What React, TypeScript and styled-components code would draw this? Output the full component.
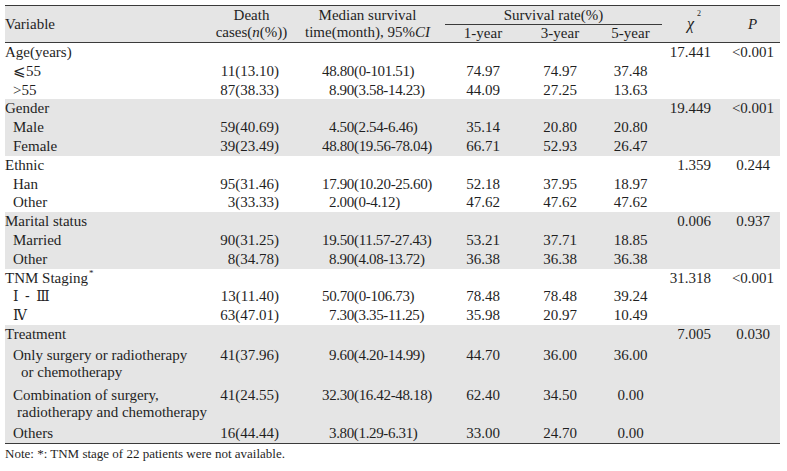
import React from "react";
import styled, { createGlobalStyle, css } from "styled-components";

const GlobalStyle = createGlobalStyle`
  html, body { margin: 0; padding: 0; background: #ffffff; }
  body {
    font-family: "Liberation Serif", "Times New Roman", "DejaVu Serif", serif;
    color: #1f1f1f;
  }
`;

const COLS = "208px 77px 155px 76px 78px 63px 63px 55px";
const SHADE = "#e5e5e5";

const Page = styled.div`
  padding: 5px 7px 0 5px;
  width: 775px;
`;

const Table = styled.div`
  display: flex;
  flex-direction: column;
  font-size: 15px;
  border-bottom: 1px solid #3a3a3a;
`;

const Header = styled.div`
  display: grid;
  grid-template-columns: ${COLS};
  grid-template-rows: 19px 17px;
  background: ${SHADE};
  border-top: 1px solid #3a3a3a;
  border-bottom: 1px solid #3a3a3a;
`;

const HeadCell = styled.div<{ $col: string; $row: string; $align?: string }>`
  grid-column: ${(p) => p.$col};
  grid-row: ${(p) => p.$row};
  display: flex;
  flex-direction: column;
  justify-content: center;
  align-items: ${(p) => p.$align || "center"};
  line-height: 17px;
  white-space: nowrap;
`;

const GroupHead = styled.div`
  grid-column: 4 / 7;
  grid-row: 1;
  display: flex;
  align-items: center;
  justify-content: center;
  line-height: 18px;
  border-bottom: 1px solid #3a3a3a;
  box-sizing: border-box;
  white-space: nowrap;
`;

const ChiMark = styled.span`
  position: relative;
  line-height: 17px;
  margin-right: 6px;
`;

const Chi = styled.span`
  font-style: italic;
  font-size: 16px;
`;

const ChiTwo = styled.span`
  position: absolute;
  left: 10px;
  top: -5px;
  font-size: 8px;
  line-height: 1;
`;

const Star = styled.span`
  display: inline-block;
  font-size: 9px;
  line-height: 1;
  transform: translateY(-7px);
  margin-left: 1px;
`;

const Section = styled.div<{ $shade: boolean }>`
  display: flex;
  flex-direction: column;
  background: ${(p) => (p.$shade ? SHADE : "transparent")};
`;

const Row = styled.div<{ $multi?: boolean }>`
  display: grid;
  grid-template-columns: ${COLS};
  align-items: start;
  white-space: nowrap;
  ${(p) =>
    p.$multi
      ? css`
          line-height: 16.5px;
          padding: 3.5px 0;
        `
      : css`
          line-height: 18.8px;
        `}
`;

const Label = styled.div<{ $indent: number }>`
  padding-left: ${(p) => p.$indent}px;
`;

const LabelLine = styled.div<{ $indent: number }>`
  padding-left: ${(p) => p.$indent}px;
`;

const Deaths = styled.div`
  text-align: right;
  padding-right: 11px;
`;

const Median = styled.div<{ $shift: boolean }>`
  padding-left: ${(p) => (p.$shift ? 39 : 32)}px;
  letter-spacing: -0.35px;
`;

const Rate = styled.div`
  text-align: center;
`;

const ChiVal = styled.div`
  text-align: right;
  padding-right: 14px;
`;

const PVal = styled.div`
  text-align: center;
  padding-left: 1px;
`;

const Note = styled.div`
  font-size: 13px;
  line-height: 16px;
  margin-top: 2px;
`;

const It = styled.i`
  font-style: italic;
`;

const Roman = styled.span`
  font-family: "DejaVu Serif", "Noto Sans CJK SC", serif;
  font-size: 14px;
  word-spacing: 2px;
`;

type DataRow = {
  label: React.ReactNode;
  lines?: { text: string; indent: number }[];
  deaths: string;
  median: string;
  r1: string;
  r3: string;
  r5: string;
};

type Group = {
  label: React.ReactNode;
  chi: string;
  p: string;
  shade: boolean;
  rows: DataRow[];
};

const groups: Group[] = [
  {
    label: "Age(years)",
    chi: "17.441",
    p: "<0.001",
    shade: false,
    rows: [
      { label: "⩽55", deaths: "11(13.10)", median: "48.80(0-101.51)", r1: "74.97", r3: "74.97", r5: "37.48" },
      { label: ">55", deaths: "87(38.33)", median: "8.90(3.58-14.23)", r1: "44.09", r3: "27.25", r5: "13.63" },
    ],
  },
  {
    label: "Gender",
    chi: "19.449",
    p: "<0.001",
    shade: true,
    rows: [
      { label: "Male", deaths: "59(40.69)", median: "4.50(2.54-6.46)", r1: "35.14", r3: "20.80", r5: "20.80" },
      { label: "Female", deaths: "39(23.49)", median: "48.80(19.56-78.04)", r1: "66.71", r3: "52.93", r5: "26.47" },
    ],
  },
  {
    label: "Ethnic",
    chi: "1.359",
    p: "0.244",
    shade: false,
    rows: [
      { label: "Han", deaths: "95(31.46)", median: "17.90(10.20-25.60)", r1: "52.18", r3: "37.95", r5: "18.97" },
      { label: "Other", deaths: "3(33.33)", median: "2.00(0-4.12)", r1: "47.62", r3: "47.62", r5: "47.62" },
    ],
  },
  {
    label: "Marital status",
    chi: "0.006",
    p: "0.937",
    shade: true,
    rows: [
      { label: "Married", deaths: "90(31.25)", median: "19.50(11.57-27.43)", r1: "53.21", r3: "37.71", r5: "18.85" },
      { label: "Other", deaths: "8(34.78)", median: "8.90(4.08-13.72)", r1: "36.38", r3: "36.38", r5: "36.38" },
    ],
  },
  {
    label: (
      <>
        TNM Staging<Star>*</Star>
      </>
    ),
    chi: "31.318",
    p: "<0.001",
    shade: false,
    rows: [
      { label: <Roman>Ⅰ - Ⅲ</Roman>, deaths: "13(11.40)", median: "50.70(0-106.73)", r1: "78.48", r3: "78.48", r5: "39.24" },
      { label: <Roman>Ⅳ</Roman>, deaths: "63(47.01)", median: "7.30(3.35-11.25)", r1: "35.98", r3: "20.97", r5: "10.49" },
    ],
  },
  {
    label: "Treatment",
    chi: "7.005",
    p: "0.030",
    shade: true,
    rows: [
      {
        label: null,
        lines: [
          { text: "Only surgery or radiotherapy", indent: 8 },
          { text: "or chemotherapy", indent: 16 },
        ],
        deaths: "41(37.96)",
        median: "9.60(4.20-14.99)",
        r1: "44.70",
        r3: "36.00",
        r5: "36.00",
      },
      {
        label: null,
        lines: [
          { text: "Combination of surgery,", indent: 8 },
          { text: "radiotherapy and chemotherapy", indent: 12 },
        ],
        deaths: "41(24.55)",
        median: "32.30(16.42-48.18)",
        r1: "62.40",
        r3: "34.50",
        r5: "0.00",
      },
      { label: "Others", deaths: "16(44.44)", median: "3.80(1.29-6.31)", r1: "33.00", r3: "24.70", r5: "0.00" },
    ],
  },
];

const Empty = styled.div``;

export default function App() {
  return (
    <>
      <GlobalStyle />
      <Page>
        <Table>
          <Header>
            <HeadCell $col="1" $row="1 / 3" $align="flex-start">
              Variable
            </HeadCell>
            <HeadCell $col="2" $row="1 / 3">
              <span>Death</span>
              <span>
                cases(<It>n</It>(%))
              </span>
            </HeadCell>
            <HeadCell $col="3" $row="1 / 3">
              <span>Median survival</span>
              <span>
                time(month), 95%<It>CI</It>
              </span>
            </HeadCell>
            <GroupHead>Survival rate(%)</GroupHead>
            <HeadCell $col="4" $row="2">
              1-year
            </HeadCell>
            <HeadCell $col="5" $row="2">
              3-year
            </HeadCell>
            <HeadCell $col="6" $row="2">
              5-year
            </HeadCell>
            <HeadCell $col="7" $row="1 / 3">
              <ChiMark>
                <Chi>χ</Chi>
                <ChiTwo>2</ChiTwo>
              </ChiMark>
            </HeadCell>
            <HeadCell $col="8" $row="1 / 3">
              <It>P</It>
            </HeadCell>
          </Header>
          {groups.map((g, gi) => (
            <Section key={gi} $shade={g.shade}>
              <Row>
                <Label $indent={0}>{g.label}</Label>
                <Empty />
                <Empty />
                <Empty />
                <Empty />
                <Empty />
                <ChiVal>{g.chi}</ChiVal>
                <PVal>{g.p}</PVal>
              </Row>
              {g.rows.map((r, ri) => (
                <Row key={ri} $multi={!!r.lines}>
                  {r.lines ? (
                    <div>
                      {r.lines.map((l, li) => (
                        <LabelLine key={li} $indent={l.indent}>
                          {l.text}
                        </LabelLine>
                      ))}
                    </div>
                  ) : (
                    <Label $indent={8}>{r.label}</Label>
                  )}
                  <Deaths>{r.deaths}</Deaths>
                  <Median $shift={r.median.indexOf(".") === 1}>{r.median}</Median>
                  <Rate>{r.r1}</Rate>
                  <Rate>{r.r3}</Rate>
                  <Rate>{r.r5}</Rate>
                  <Empty />
                  <Empty />
                </Row>
              ))}
            </Section>
          ))}
        </Table>
        <Note>Note: *: TNM stage of 22 patients were not available.</Note>
      </Page>
    </>
  );
}
